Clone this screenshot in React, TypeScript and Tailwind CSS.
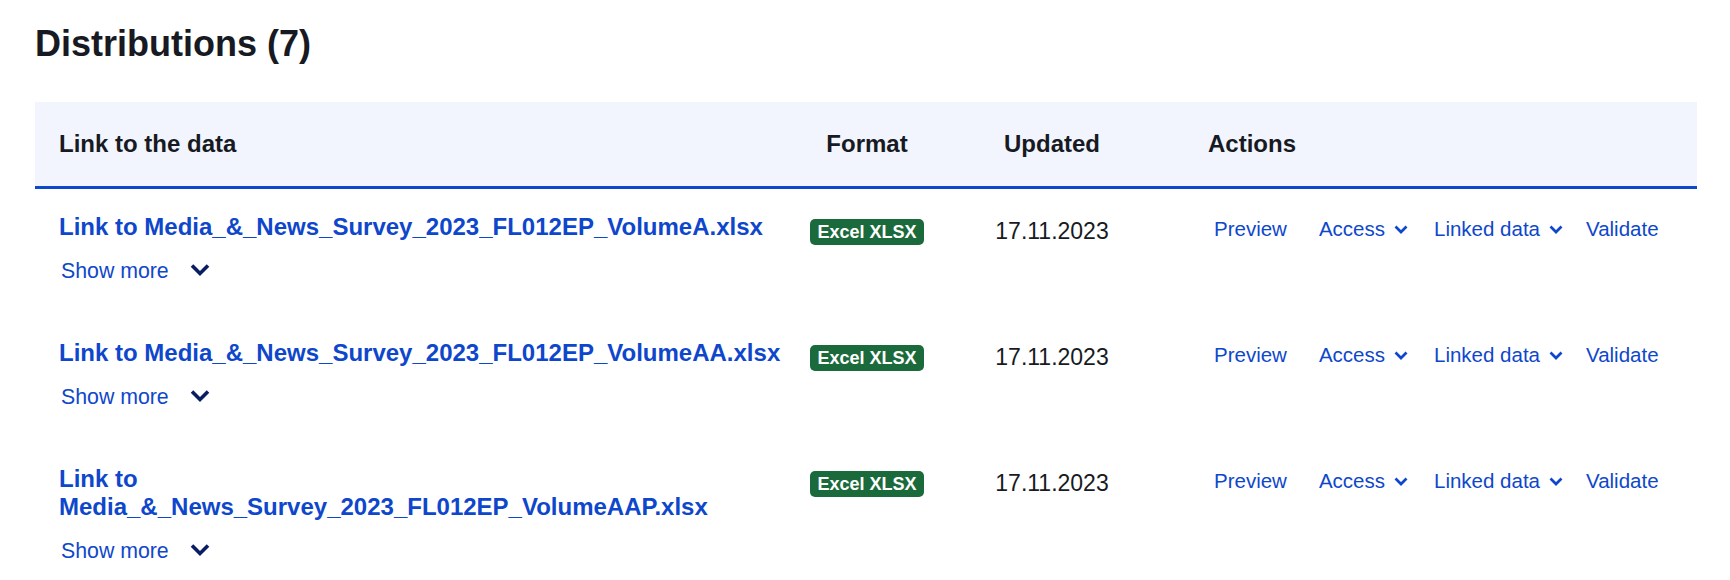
const rows = [
  "Media_&_News_Survey_2023_FL012EP_VolumeA.xlsx",
  "Media_&_News_Survey_2023_FL012EP_VolumeAA.xlsx",
  "Media_&_News_Survey_2023_FL012EP_VolumeAAP.xlsx",
];

function SmallChevron() {
  return (
    <svg width="14" height="9" viewBox="0 0 14 9" className="ml-[9px] mt-[1px]" fill="none">
      <path d="M1.5 1.5 L7 7 L12.5 1.5" stroke="#0e47cb" strokeWidth="2.7" />
    </svg>
  );
}

function ShowMoreChevron() {
  return (
    <svg width="20" height="14" viewBox="0 0 20 14" className="ml-[21px] mt-[6px]" fill="none">
      <path d="M2 2.5 L10 10.5 L18 2.5" stroke="#0b1d62" strokeWidth="3.6" />
    </svg>
  );
}

export default function App() {
  return (
    <div className="min-h-[580px] bg-white pl-[35px] pr-[33px] pt-[23px] font-['Liberation_Sans',Arial,sans-serif] text-[#171a22]">
      <h1 className="text-[36px] font-bold leading-[42px]">Distributions (7)</h1>

      <div className="mt-[37px]">
        {/* header */}
        <div className="grid h-[87px] grid-cols-[762px_140px_230px_1fr] items-center border-b-[3px] border-[#0e47cb] bg-[#f2f5fd] text-[24px] font-bold leading-[28px]">
          <div className="pl-6">Link to the data</div>
          <div className="text-center">Format</div>
          <div className="text-center">Updated</div>
          <div className="pl-[41px]">Actions</div>
        </div>

        {rows.map((name) => (
          <div key={name} className="grid grid-cols-[762px_140px_230px_1fr] items-start pt-6 pb-[30px]">
            <div className="pl-6 pr-3">
              <a href="#" className="block text-[24px] font-bold leading-[28px] text-[#0e47cb]">
                Link to {name}
              </a>
              <button className="ml-[2px] mt-4 flex items-start text-[21.3px] leading-[28px] text-[#0e47cb]">
                Show more
                <ShowMoreChevron />
              </button>
            </div>
            <div className="mt-[6px] flex justify-center">
              <span className="h-[26px] rounded-[5px] bg-[#1b6a3b] px-[7px] text-[18px] font-bold leading-[26px] text-white">
                Excel XLSX
              </span>
            </div>
            <div className="mt-1 text-center text-[23px] leading-[28px]">17.11.2023</div>
            <div className="mt-[2px] flex items-center pl-[47px] text-[20.5px] leading-[28px] text-[#0e47cb]">
              <a href="#">Preview</a>
              <a href="#" className="ml-[32px] flex items-center">
                Access
                <SmallChevron />
              </a>
              <a href="#" className="ml-[26px] flex items-center">
                Linked data
                <SmallChevron />
              </a>
              <a href="#" className="ml-[23px]">Validate</a>
            </div>
          </div>
        ))}
      </div>
    </div>
  );
}
